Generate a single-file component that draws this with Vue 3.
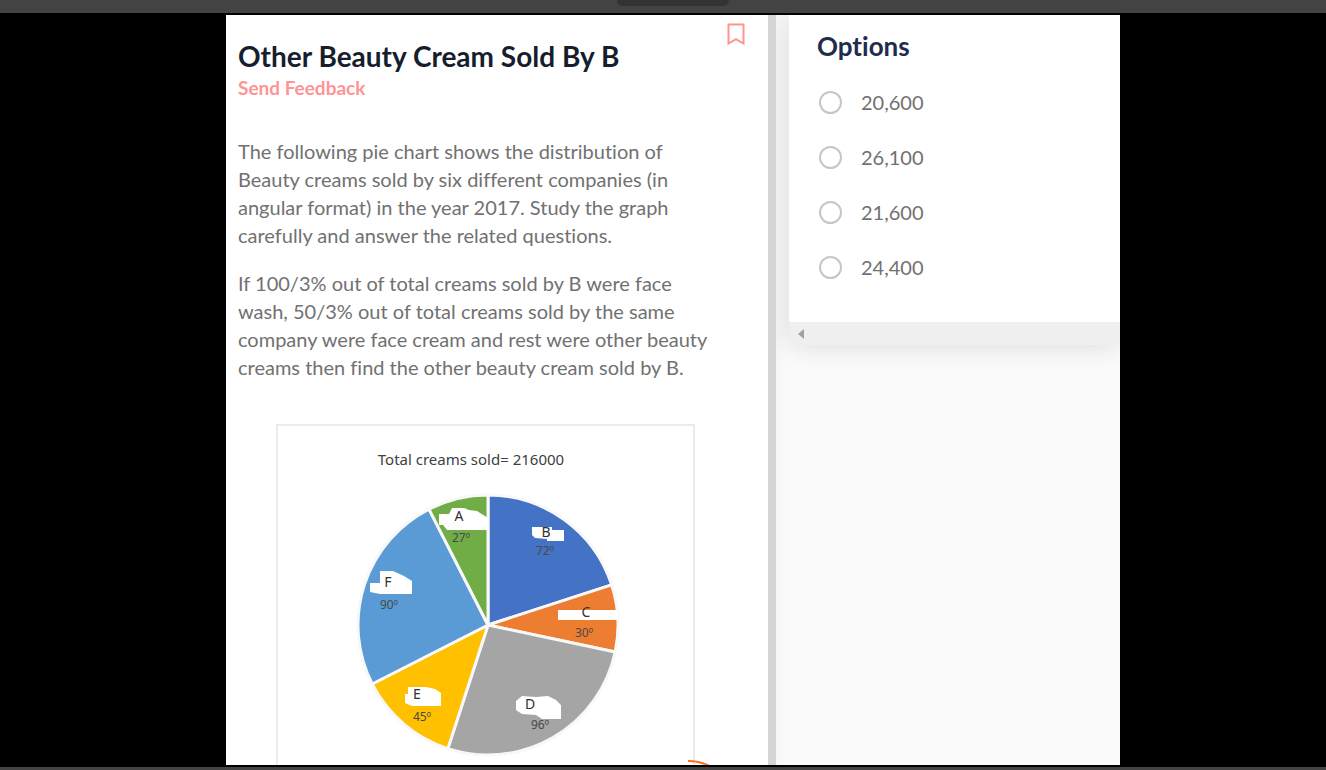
<script setup>
import { ref } from 'vue'

const options = ['20,600', '26,100', '21,600', '24,400']
const selected = ref('')

const centre = { x: 212, y: 201 }
const radius = 130
const shares = [
  { name: 'B', degrees: 72, color: '#4472c4' },
  { name: 'C', degrees: 30, color: '#ed7d31' },
  { name: 'D', degrees: 96, color: '#a5a5a5' },
  { name: 'E', degrees: 45, color: '#ffc000' },
  { name: 'F', degrees: 90, color: '#5b9bd5' },
  { name: 'A', degrees: 27, color: '#70ad47' }
]

function rim(degrees) {
  const angle = (degrees * Math.PI) / 180
  return `${centre.x + radius * Math.sin(angle)} ${centre.y - radius * Math.cos(angle)}`
}

let start = 0
const slices = shares.map((share) => {
  const end = start + share.degrees
  const d = `M${centre.x} ${centre.y}L${rim(start)}A${radius} ${radius} 0 0 1 ${rim(end)}Z`
  start = end
  return { ...share, d }
})
</script>

<template>
  <div class="page">
    <header class="topbar"><span class="pill"></span></header>

    <div class="stage">
      <main class="viewer">
        <section class="question">
          <div class="heading">
            <h1>Other Beauty Cream Sold By B</h1>
            <button class="bookmark" type="button" aria-label="Bookmark">
              <svg width="18" height="23" viewBox="0 0 18 23">
                <path d="M1.5 1.5H16.5V20.6L9 16.2L1.5 20.6Z" fill="none" stroke="#ff9494" stroke-width="2" />
              </svg>
            </button>
          </div>
          <a class="feedback" href="#">Send Feedback</a>

          <div class="copy">
            <p>
              The following pie chart shows the distribution of<br />
              Beauty creams sold by six different companies (in<br />
              angular format) in the year 2017. Study the graph<br />
              carefully and answer the related questions.
            </p>
            <p>
              If 100/3% out of total creams sold by B were face<br />
              wash, 50/3% out of total creams sold by the same<br />
              company were face cream and rest were other beauty<br />
              creams then find the other beauty cream sold by B.
            </p>
          </div>

          <svg class="chart" width="419" height="372" viewBox="0 0 419 372" role="img" aria-label="Creams sold by company">
            <rect x="1" y="1" width="417" height="370" fill="#fff" stroke="#ebebeb" stroke-width="2" />
            <text class="chart-title" x="195" y="41">Total creams sold= 216000</text>
            <path v-for="slice in slices" :key="slice.name" :d="slice.d" :fill="slice.color" class="slice" />

            <g fill="#fff">
              <path d="M163 90H173L176 84H188L193 86L201 87L212 94V106H171L167 101H163Z" />
              <path d="M256 103H276V106H288V117H271V115L259 114L256 111Z" />
              <path d="M282 186H342V196H282Z" />
              <path d="M240 277L246 272L260 273L272 272L280 276L285 281V295H266L260 291L246 290L240 286Z" />
              <path d="M129 270H132V263H150L159 265L165 269V282H136L129 279Z" />
              <path d="M94 159H104V147H117L128 152L136 157V170H104L94 168Z" />
            </g>
            <g class="letters">
              <text x="183" y="97">A</text>
              <text x="270" y="113">B</text>
              <text x="310" y="193">C</text>
              <text x="254" y="285">D</text>
              <text x="141" y="275">E</text>
              <text x="112" y="163">F</text>
            </g>
            <g class="degrees">
              <text x="185" y="118">27º</text>
              <text x="269" y="131">72º</text>
              <text x="308" y="213">30º</text>
              <text x="264" y="305">96º</text>
              <text x="146" y="297">45º</text>
              <text x="113" y="185">90º</text>
            </g>
          </svg>

          <svg class="progress" width="60" height="8" viewBox="0 0 60 8">
            <path d="M6 4A45 45 0 0 1 38 17" fill="none" stroke="#ff6f26" stroke-width="2" />
          </svg>
        </section>

        <div class="divider"></div>

        <section class="answers">
          <div class="card">
            <form class="options">
              <h2>Options</h2>
              <label v-for="option in options" :key="option" class="option">
                <input v-model="selected" type="radio" name="answer" :value="option" />
                <span>{{ option }}</span>
              </label>
            </form>
            <div class="scrollbar">
              <svg width="6" height="10" viewBox="0 0 6 10"><path d="M6 0V10L0 5Z" fill="#a0a0a0" /></svg>
            </div>
          </div>
        </section>
      </main>
    </div>
  </div>
</template>

<style>
body {
  margin: 0;
  background: #000;
}
</style>

<style scoped>
.page {
  display: flex;
  flex-direction: column;
  box-sizing: border-box;
  height: 100vh;
  overflow: hidden;
  border-bottom: 3px solid #434343;
  background: #000;
  font-family: Lato, "Liberation Sans", sans-serif;
  font-variant-ligatures: none;
}

.topbar {
  display: flex;
  justify-content: center;
  flex: none;
  height: 13px;
  background: #434343;
}

.pill {
  width: 112px;
  height: 6px;
  margin-left: 20px;
  border-radius: 0 0 14px 14px;
  background: #333;
}

.stage {
  display: grid;
  grid-template-columns: 226fr 894fr 206fr;
  flex: 1;
  min-height: 0;
  padding: 2px 0;
}

.viewer {
  grid-column: 2;
  display: grid;
  grid-template-columns: minmax(0, 542fr) 8px minmax(0, 344fr);
  min-height: 0;
  overflow: hidden;
  background: #fff;
}

.question {
  position: relative;
  min-height: 0;
  padding: 0 12px;
  overflow: hidden;
}

.heading {
  display: flex;
  justify-content: space-between;
}

h1 {
  margin: 24px 0 0;
  color: #161e2e;
  font-size: 28px;
  font-weight: 700;
  line-height: 34px;
}

.bookmark {
  height: 23px;
  margin: 8px 11px 0 0;
  padding: 0;
  border: 0;
  background: none;
}

.feedback {
  display: block;
  color: #ff9494;
  font-size: 19px;
  font-weight: 700;
  line-height: 30px;
  text-decoration: none;
}

.copy {
  margin-top: 34px;
  color: #717171;
  font-size: 20px;
  line-height: 28px;
  white-space: nowrap;
}

.copy p {
  margin: 0 0 20px;
}

.chart {
  display: block;
  margin: 43px auto 0 38px;
}

.slice {
  stroke: #f8f8f8;
  stroke-width: 3;
  stroke-linejoin: round;
}

.chart text {
  font-family: "Noto Sans", sans-serif;
  text-anchor: middle;
}

.chart .chart-title {
  fill: #404040;
  font-size: 15px;
}

.letters {
  fill: #303030;
  font-size: 14px;
}

.degrees {
  fill: #484848;
  font-size: 12px;
}

.progress {
  position: absolute;
  right: 26px;
  bottom: 0;
}

.divider {
  z-index: 1;
  background: #d5d5d5;
  box-shadow: 0 0 16px rgba(0, 0, 0, 0.06);
  clip-path: inset(0 -24px 0 0);
}

.answers {
  min-height: 0;
  padding-left: 13px;
  overflow: hidden;
  background: #fbfbfb;
}

.card {
  background: #fff;
  box-shadow: 0 0 28px rgba(0, 0, 0, 0.14);
}

.options {
  display: flex;
  flex-direction: column;
  padding: 14px 28px 21px;
}

h2 {
  margin: 0 0 18px;
  color: #202c4c;
  font-size: 26px;
  font-weight: 700;
  line-height: 34px;
}

.option {
  display: flex;
  align-items: center;
  gap: 19px;
  height: 42px;
  margin-bottom: 13px;
  color: #717171;
  font-size: 20px;
}

.option input {
  appearance: none;
  width: 23px;
  height: 23px;
  margin: 0 0 0 2px;
  border: 2px solid #c6c6c6;
  border-radius: 50%;
  background: #fff;
}

.option input:checked {
  border: 7px solid #ff9494;
}

.scrollbar {
  display: flex;
  align-items: center;
  height: 23px;
  padding-left: 9px;
  background: #efefef;
}
</style>
